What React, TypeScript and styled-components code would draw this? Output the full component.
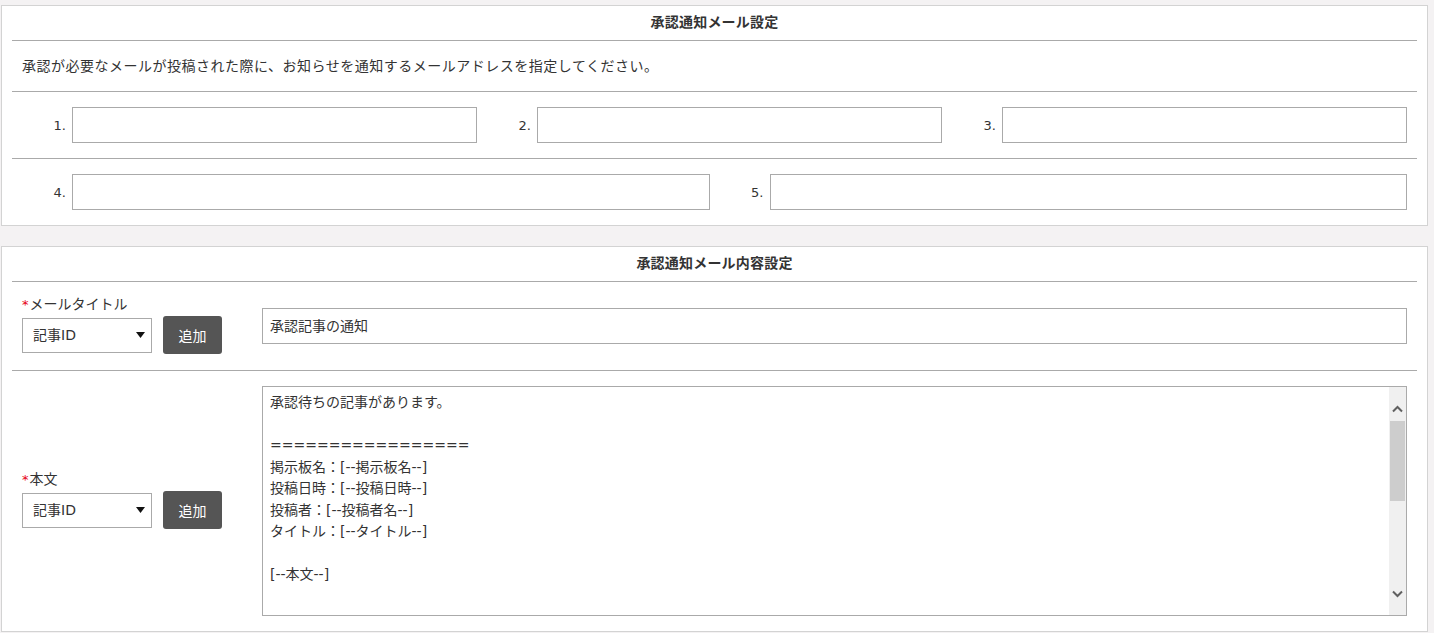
import React from 'react';
import styled, {createGlobalStyle} from 'styled-components';

const svgUrl = (svg: string) => `url("data:image/svg+xml,${encodeURIComponent(svg)}")`;

const caretDown = svgUrl(
  "<svg xmlns='http://www.w3.org/2000/svg' width='9' height='6'><path d='M0 0 L9 0 L4.5 6 Z' fill='#111'/></svg>",
);

const FONT_STACK = "'DejaVu Sans', 'Noto Sans CJK JP', 'Noto Sans', sans-serif";

const GlobalStyle = createGlobalStyle`
  * {
    box-sizing: border-box;
  }
  html, body {
    margin: 0;
    padding: 0;
    background: #f4f2f3;
  }
  body {
    font-family: ${FONT_STACK};
    font-size: 14px;
    color: #333;
  }
`;

const BODY_TEXT = [
  '承認待ちの記事があります。',
  '',
  '=================',
  '掲示板名：[--掲示板名--]',
  '投稿日時：[--投稿日時--]',
  '投稿者：[--投稿者名--]',
  'タイトル：[--タイトル--]',
  '',
  '[--本文--]',
  '',
  '=================',
  '',
  '下記URLより内容を確認し、承認してください。',
  '[--承認URL--]',
].join('\n');

const Chevron: React.FunctionComponent<{up?: boolean}> = ({up}) => (
  <svg width="11" height="8" viewBox="0 0 11 8">
    <path
      d={up ? 'M1 6.5 L5.5 2 L10 6.5' : 'M1 1.5 L5.5 6 L10 1.5'}
      fill="none"
      stroke="#606060"
      strokeWidth="2"
    />
  </svg>
);

const EmailRow: React.FunctionComponent<{start: number; count: number}> = ({start, count}) => (
  <AddressRow $columns={count}>
    {Array.from({length: count}).map((_, i) => (
      <AddressCell key={i}>
        <AddressLabel>{`${start + i}.`}</AddressLabel>
        <TextInput type="text" />
      </AddressCell>
    ))}
  </AddressRow>
);

const TagPicker: React.FunctionComponent<{label: string}> = ({label}) => (
  <PickerGroup>
    <FieldLabel>
      <Required>*</Required>
      {label}
    </FieldLabel>
    <PickerLine>
      <TagSelect defaultValue="id">
        <option value="id">記事ID</option>
        <option value="board">掲示板名</option>
        <option value="date">投稿日時</option>
      </TagSelect>
      <AddButton type="button">追加</AddButton>
    </PickerLine>
  </PickerGroup>
);

const App: React.FunctionComponent = () => {
  return (
    <Page>
      <GlobalStyle />
      <Panel>
        <PanelTitle>承認通知メール設定</PanelTitle>
        <Description>
          承認が必要なメールが投稿された際に、お知らせを通知するメールアドレスを指定してください。
        </Description>
        <EmailRow start={1} count={3} />
        <EmailRow start={4} count={2} />
      </Panel>
      <Panel>
        <PanelTitle>承認通知メール内容設定</PanelTitle>
        <FieldRow $pad={12}>
          <TagPicker label="メールタイトル" />
          <TextInput type="text" defaultValue="承認記事の通知" />
        </FieldRow>
        <FieldRow $pad={15}>
          <TagPicker label="本文" />
          <BodyBox>
            <BodyArea defaultValue={BODY_TEXT} />
            <ScrollTrack>
              <ScrollArrow $up>
                <Chevron up />
              </ScrollArrow>
              <ScrollThumb />
              <ScrollArrow>
                <Chevron />
              </ScrollArrow>
            </ScrollTrack>
          </BodyBox>
        </FieldRow>
      </Panel>
    </Page>
  );
};

const Page = styled.div`
  display: flex;
  flex-direction: column;
  gap: 20px;
  padding: 5px 6px 0 1px;
`;

const Panel = styled.section`
  background: #fff;
  border: 1px solid #d3d3d3;
  padding: 0 10px;
`;

const PanelTitle = styled.h2`
  margin: 0;
  height: 35px;
  line-height: 33px;
  text-align: center;
  font-size: 14px;
  font-weight: bold;
  color: #333;
  border-bottom: 1px solid #aaa;
  letter-spacing: 0.2px;
`;

const Description = styled.p`
  margin: 0;
  padding: 15px 10px;
  line-height: 20px;
  letter-spacing: 0.5px;
  border-bottom: 1px solid #aaa;
`;

const AddressRow = styled.div<{$columns: number}>`
  display: grid;
  grid-template-columns: repeat(${({$columns}) => $columns}, 1fr);
  padding: 15px 10px 15px 0;
  border-bottom: 1px solid #aaa;
  &:last-child {
    border-bottom: none;
  }
`;

const AddressCell = styled.div`
  display: flex;
  align-items: center;
`;

const AddressLabel = styled.span`
  width: 60px;
  flex: none;
  padding-right: 6px;
  text-align: right;
  font-size: 13px;
  color: #333;
`;

const TextInput = styled.input`
  flex: 1;
  min-width: 0;
  height: 36px;
  border: 1px solid #aaa;
  border-radius: 0;
  padding: 0 7px 2px;
  font-family: ${FONT_STACK};
  font-size: 14px;
  color: #333;
  background: #fff;
  outline: none;
`;

const FieldRow = styled.div<{$pad: number}>`
  display: flex;
  align-items: center;
  padding: ${({$pad}) => $pad}px 10px;
  border-bottom: 1px solid #aaa;
  &:last-child {
    border-bottom: none;
  }
`;

const PickerGroup = styled.div`
  width: 240px;
  flex: none;
  display: flex;
  flex-direction: column;
  gap: 2px;
  padding-bottom: 4px;
`;

const FieldLabel = styled.label`
  display: block;
  height: 20px;
  line-height: 20px;
  font-size: 14px;
  color: #333;
`;

const Required = styled.span`
  color: #e60012;
  font-size: 13px;
  margin-right: 1px;
`;

const PickerLine = styled.div`
  display: flex;
  align-items: center;
  gap: 11px;
`;

const TagSelect = styled.select`
  appearance: none;
  width: 130px;
  height: 35px;
  padding: 0 20px 0 10px;
  border: 1px solid #aaa;
  border-radius: 0;
  background: #fff ${caretDown} no-repeat right 6px center;
  font-family: ${FONT_STACK};
  font-size: 14px;
  color: #333;
  outline: none;
`;

const AddButton = styled.button`
  width: 59px;
  height: 38px;
  border: none;
  border-radius: 3px;
  background: #555;
  color: #fff;
  font-family: ${FONT_STACK};
  font-size: 14px;
  padding: 0;
`;

const BodyBox = styled.div`
  flex: 1;
  min-width: 0;
  height: 230px;
  display: flex;
  border: 1px solid #aaa;
  background: #fff;
`;

const BodyArea = styled.textarea`
  flex: 1;
  min-width: 0;
  border: none;
  padding: 5px 7px;
  font-family: ${FONT_STACK};
  font-size: 14px;
  line-height: 21.5px;
  color: #333;
  resize: none;
  outline: none;
  overflow: hidden;
`;

const ScrollTrack = styled.div`
  width: 17px;
  flex: none;
  display: flex;
  flex-direction: column;
  justify-content: space-between;
  background: #f0f0f0;
  position: relative;
`;

const ScrollArrow = styled.div<{$up?: boolean}>`
  height: 34px;
  display: flex;
  justify-content: center;
  align-items: ${({$up}) => ($up ? 'flex-start' : 'flex-end')};
  padding: ${({$up}) => ($up ? '18px 0 0' : '0 0 17px')};
  svg {
    display: block;
  }
`;

const ScrollThumb = styled.div`
  position: absolute;
  top: 34px;
  left: 1px;
  right: 1px;
  height: 80px;
  background: #cdcdcd;
`;

export default App;
